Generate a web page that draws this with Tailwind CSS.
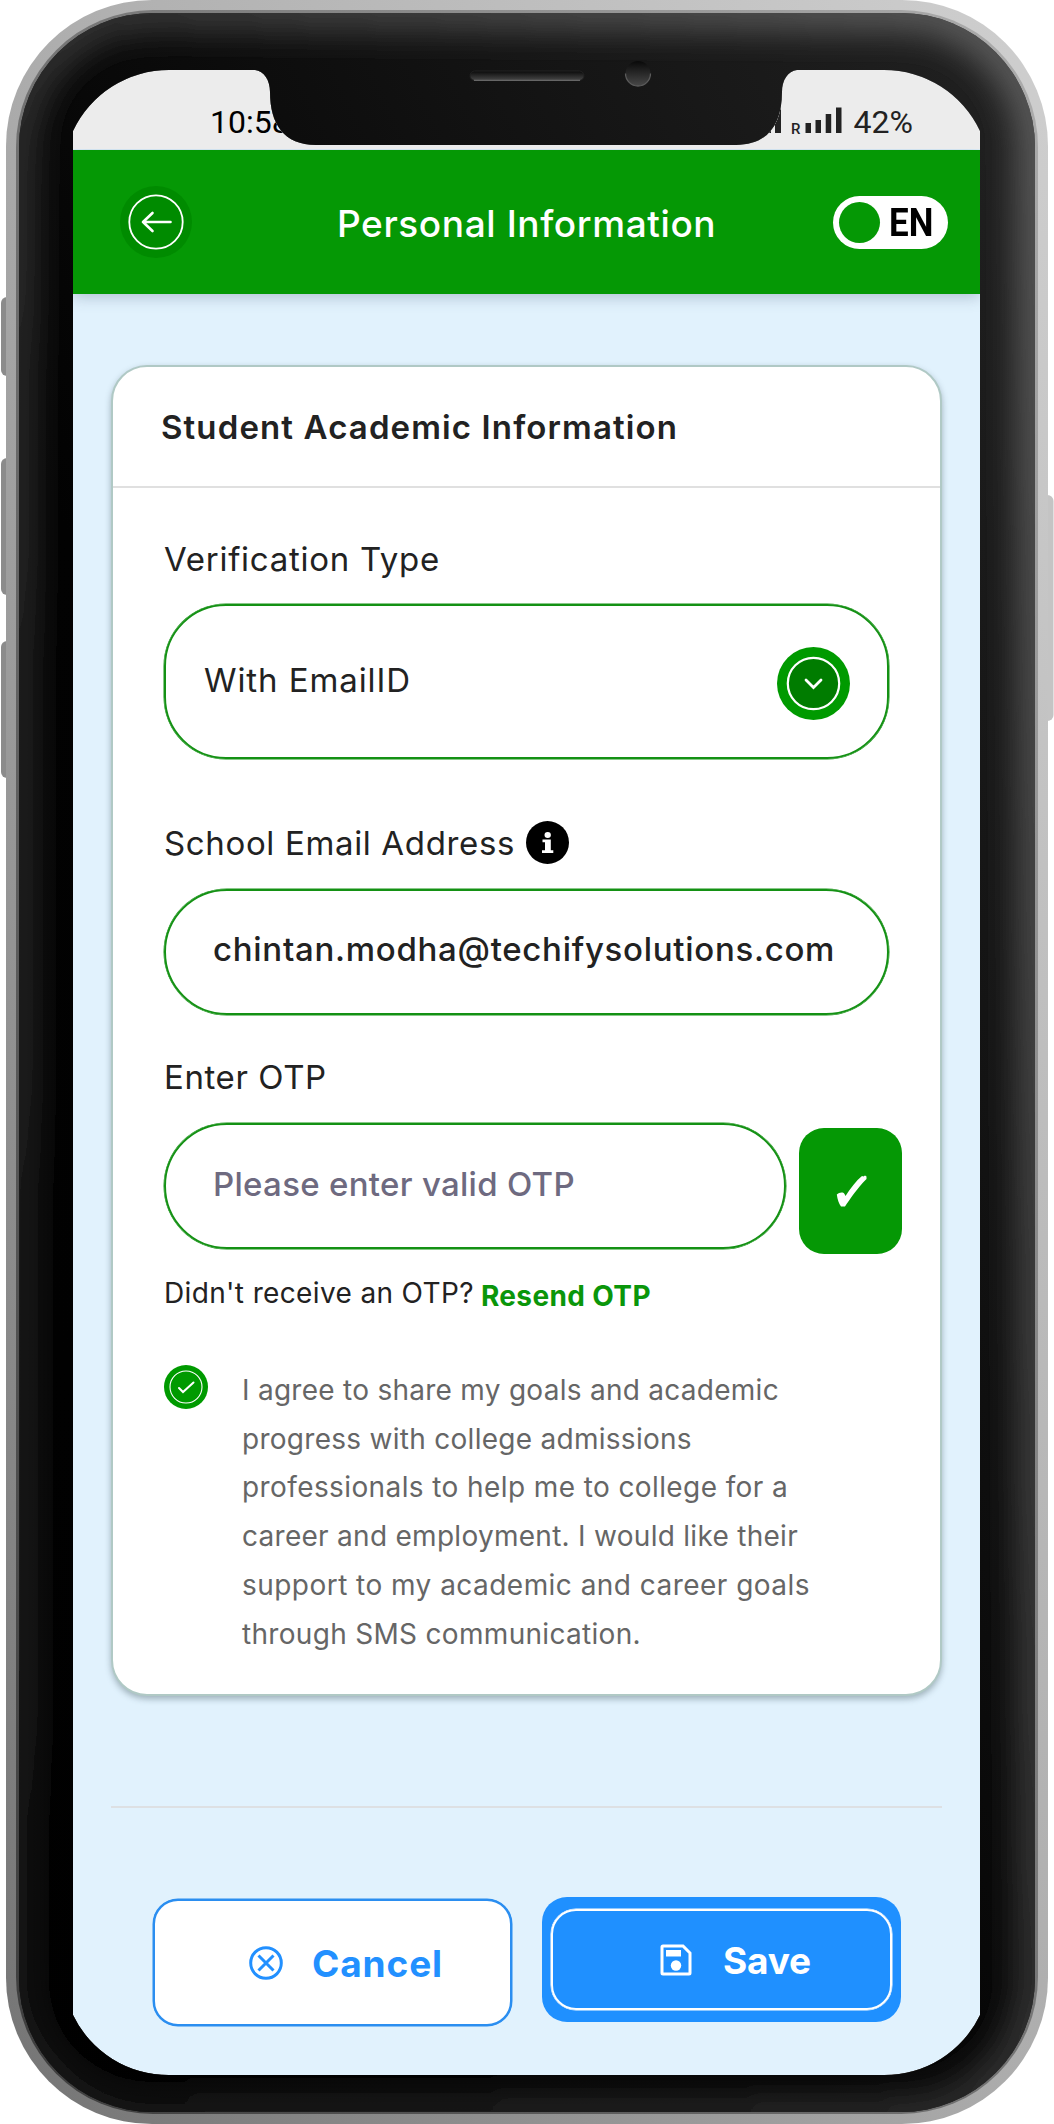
<!DOCTYPE html>
<html lang="en">
<head>
<meta charset="utf-8">
<title>Personal Information</title>
<script src="https://cdn.jsdelivr.net/npm/@tailwindcss/browser@4"></script>
</head>
<body class="bg-white font-['Inter',sans-serif] text-[#222]">
<div class="relative h-[2124px] w-[1054px] overflow-hidden">
  <div class="flex h-full flex-col bg-[#e1f2fd] mx-[60px] pl-[13px] pr-[14px]">
    <!-- status bar -->
    <div class="relative z-20 flex h-[149px] shrink-0 items-end bg-[#ececec] pb-[8px] pl-[137px] pr-[67px] font-['Roboto',sans-serif] text-[32px] leading-[38px]">
      <span class="grow text-black">10:58</span>
      <svg class="mb-[7px] mr-[12px] h-[28px] w-[80px]" viewBox="761 106 80 28" fill="#222"><rect x="764" y="114" width="6" height="19"/><rect x="774" y="107" width="6" height="26"/><text x="790" y="133.500" font-size="15" font-weight="500">R</text><rect x="804.500" y="123" width="5.500" height="10"/><rect x="814.500" y="120" width="5.500" height="13"/><rect x="824.700" y="114" width="5.500" height="19"/><rect x="835" y="107.500" width="5.500" height="25.500"/></svg>
      <span>42%</span>
    </div>
    <!-- header -->
    <header class="relative z-10 mt-px flex h-[144px] shrink-0 items-center bg-[#059805] pl-[47px] pr-[32px] shadow-[0_3px_14px_rgba(60,80,110,0.3)]">
      <svg class="size-[72px]" viewBox="0 0 72 72" fill="none" stroke="#fff" stroke-linecap="round"><circle cx="36" cy="36" r="36" fill="#008b00" stroke="none"/><circle cx="36" cy="36" r="26.700" stroke-width="1.800"/><path d="M50.500 36H23M32.500 27 23 36 32.500 45" stroke-width="2.600" stroke-linejoin="round"/></svg>
      <h1 class="ml-[145px] mt-[3px] grow whitespace-nowrap text-[37px] font-medium leading-[40px] tracking-[0.6px] text-white">Personal Information</h1>
      <div class="flex h-[53px] w-[115px] items-center rounded-full bg-white pl-[6px]">
        <span class="size-[41px] rounded-full bg-[#059805]"></span>
        <span class="ml-[9px] mt-px origin-left scale-x-[0.92] text-[38px] font-bold leading-none text-black font-['Roboto',sans-serif]">EN</span>
      </div>
    </header>
    <!-- form card -->
    <main class="mt-[71px] ml-[38px] h-[1331px] w-[831px] shrink-0 rounded-[36px] border-2 border-[#b0c9c5] bg-white shadow-[0_3px_6px_rgba(60,80,90,0.4)]">
      <div class="flex h-[121px] items-center border-b-2 border-[#e0e0e0] pl-[48px]"><h2 class="whitespace-nowrap text-[33px] font-semibold leading-[40px] tracking-[1.12px]">Student Academic Information</h2></div>
      <div class="whitespace-nowrap pl-[51px] text-[33px] leading-[40px]">
        <div class="mt-[51px] tracking-[0.72px]">Verification Type</div>
        <div class="mt-[25px] flex h-[155px] w-[725px] items-center justify-between rounded-[62px] border-2 border-[#149114] pl-[38px] pr-[37px] shadow-[0_0_0_0.5px_#149114]">
          <span class="mb-[4px] tracking-[0.91px]">With EmailID</span>
          <svg class="mt-[3px] size-[73px]" viewBox="0 0 73 73" fill="none" stroke="#fff"><circle cx="36.500" cy="36.500" r="36.500" fill="#009a00" stroke="none"/><circle cx="36.500" cy="36.500" r="25.700" fill="#007c00" stroke-width="2.200"/><path d="m29 33 7.500 7.500 7.500-7.500" stroke-width="2.800" stroke-linecap="round"/></svg>
        </div>
        <div class="mt-[64px] flex h-[40px]"><span class="tracking-[0.65px]">School Email Address</span>
          <svg class="-mt-[2px] ml-[11px] size-[43px]" viewBox="0 0 43 43"><circle cx="21.500" cy="21.500" r="21.500"/><path fill="#fff" d="M18.500 14a3.200 2.900 0 1 0 6.400 0a3.200 2.900 0 1 0-6.400 0M16.500 18.500h8.300v10.800h2.500v2.700H16v-2.700h3V21.200h-2.500z"/></svg>
        </div>
        <div class="mt-[26px] flex h-[126px] w-[725px] items-center rounded-full border-2 border-[#149114] pb-[7px] pl-[47px] font-medium tracking-[0.71px] shadow-[0_0_0_0.5px_#149114]">chintan.modha@techifysolutions.com</div>
        <div class="mt-[42px] tracking-[0.6px]">Enter OTP</div>
        <div class="mt-[26px] flex">
          <div class="flex h-[126px] w-[622px] items-center rounded-full border-2 border-[#149114] pb-[4px] pl-[47px] font-medium tracking-[0.3px] text-[#6e6a80] shadow-[0_0_0_0.5px_#149114]">Please enter valid OTP</div>
          <button class="mt-[5px] ml-[12.500px] flex h-[126px] w-[103px] items-center justify-center rounded-[25px] bg-[#059805]"><svg class="ml-[2px] h-[32px] w-[31px]" viewBox="0 0 31 32" fill="#fff"><path d="M30.500 1.500 29 .5l-1.500 1L26 1C20 6 14.500 13 9.500 21L8.500 19C7 16.500 3 17.500.8 19.500 1.500 25 3 28.500 5 31.500h4C14 24 21 13.500 30.500 4z"/></svg></button>
        </div>
        <div class="mt-[19px] flex h-[43px] text-[28px]"><span class="tracking-[0.36px]">Didn't receive an OTP?</span><a class="mt-[3px] ml-[7px] font-bold tracking-[0.37px] text-[#0a960a]">Resend OTP</a></div>
        <div class="mt-[49px] flex gap-[34px]">
          <svg class="size-[44px] shrink-0" viewBox="0 0 44 44" fill="none" stroke="#fff"><circle cx="22" cy="22" r="22" fill="#009a00" stroke="none"/><circle cx="22" cy="22" r="16" stroke-width="1.100"/><path d="m15 23 4 4 10.500-9.500" stroke-width="2" stroke-linecap="round"/></svg>
          <p class="mt-px text-[28px] leading-[48.700px] text-[#666]">
            <span class="tracking-[0.27px]">I agree to share my goals and academic</span><br>
            <span class="tracking-[0.28px]">progress with college admissions</span><br>
            <span class="tracking-[0.4px]">professionals to help me to college for a</span><br>
            <span class="tracking-[0.28px]">career and employment. I would like their</span><br>
            <span class="tracking-[0.46px]">support to my academic and career goals</span><br>
            <span class="tracking-[0.31px]">through SMS communication.</span>
          </p>
        </div>
      </div>
    </main>
    <div class="mt-[110px] ml-[38px] h-[2px] w-[831px] shrink-0 bg-[#dde0e3]"></div>
    <!-- actions -->
    <div class="mt-[89px] ml-[80px] flex gap-[30px] text-[37px] font-bold leading-[44px]">
      <button class="mt-[2px] flex h-[127px] w-[359px] items-center rounded-[25px] border-2 border-[#2b8ef0] bg-white pl-[93px] text-[#2290ff] shadow-[0_0_0_0.5px_#2b8ef0]">
        <svg class="mt-px size-[36px] shrink-0" viewBox="0 0 36 36" fill="none" stroke="currentColor" stroke-width="3"><circle cx="18" cy="18" r="15.300"/><path d="m10.500 10.500 15 15m0-15-15 15"/></svg>
        <span class="mt-[2px] ml-[28px] tracking-[0.88px]">Cancel</span>
      </button>
      <button class="h-[125px] w-[359px] rounded-[25px] bg-[#1f90ff] px-[9px] text-white">
        <span class="flex h-[101px] items-center rounded-[25px] border-[2px] border-white pl-[107px] shadow-[0_0_0_0.5px_#fff]">
          <svg class="mt-px size-[32px] shrink-0" viewBox="0 0 32 32"><path d="M3 2h20l7 7v20a1 1 0 0 1-1 1H3a1 1 0 0 1-1-1V3a1 1 0 0 1 1-1z" fill="none" stroke="#fff" stroke-width="3"/><path d="M6 6h15v6.500H6z" fill="#fff"/><circle cx="16" cy="21.500" r="5.200" fill="#fff"/></svg>
          <span class="mt-[2px] ml-[31px] tracking-[-0.16px]">Save</span>
        </span>
      </button>
    </div>
  </div>
  <!-- device frame -->
  <svg class="absolute inset-0 z-30 h-[2124px] w-[1054px]" viewBox="0 0 1054 2124">
    <defs>
      <linearGradient id="metal" x1="0" y1="1" x2="1" y2="0"><stop offset="0" stop-color="#747474"/><stop offset=".5" stop-color="#adadad"/><stop offset="1" stop-color="#cfcfcf"/></linearGradient>
      <linearGradient id="rim" x1="0" y1="1" x2="1" y2="0"><stop offset="0" stop-color="#3c3c3c"/><stop offset=".5" stop-color="#747474"/><stop offset="1" stop-color="#adadad"/></linearGradient>
      <linearGradient id="body" x1="0" y1="1" x2="1" y2="0"><stop offset="0" stop-color="#000"/><stop offset=".4" stop-color="#020202"/><stop offset="1" stop-color="#222"/></linearGradient>
      <linearGradient id="glow" x1="0" y1="1" x2="1" y2="0"><stop offset="0" stop-color="#161616"/><stop offset=".4" stop-color="#262626"/><stop offset="1" stop-color="#5c5c5c"/></linearGradient>
      <linearGradient id="slot" x1="0" y1="0" x2="0" y2="1"><stop offset="0" stop-color="#090909"/><stop offset="1" stop-color="#484848"/></linearGradient>
      <filter id="soft" filterUnits="userSpaceOnUse" x="-40" y="-40" width="1134" height="2204"><feGaussianBlur stdDeviation="16"/></filter>
      <clipPath id="hole"><path clip-rule="evenodd" d="M0 0H1054V2124H0ZM73 131A106 106 0 0 1 169 70H255C264 71 270 80 270 92C270 124 284 145 316 145H736C768 145 782 124 782 92C782 80 788 71 797 70H884A106 106 0 0 1 980 131V2015A106 106 0 0 1 884 2075H169A106 106 0 0 1 73 2015Z"/></clipPath>
      <clipPath id="inner"><rect x="19" y="13" width="1016" height="2099" rx="134"/></clipPath>
    </defs>
    <g clip-path="url(#hole)">
      <path fill="#fff" d="M0 0H1054V2124H0Z"/>
      <g fill="#8b8b8b"><rect x="1" y="297" width="14" height="79" rx="6"/><rect x="1" y="458" width="14" height="137" rx="6"/><rect x="1" y="641" width="14" height="137" rx="6"/></g>
      <rect x="1040" y="495" width="13.500" height="226" rx="6" fill="#c4c4c4"/>
      <rect x="6" width="1042" height="2124" rx="146" fill="url(#metal)"/>
      <rect x="16" y="10" width="1022" height="2104" rx="137" fill="url(#rim)"/>
      <g clip-path="url(#inner)">
        <rect x="19" y="13" width="1016" height="2099" fill="url(#body)"/>
        <rect x="16" y="10" width="1022" height="2105" rx="136" fill="none" stroke="url(#glow)" stroke-width="44" filter="url(#soft)"/>
      </g>
      <rect x="470" y="71" width="114" height="9.500" rx="4.700" fill="url(#slot)" stroke="#222"/><path d="M474 80.300H580" stroke="#666" stroke-width="1.200"/>
      <circle cx="638" cy="73.500" r="12.500" fill="url(#slot)"/><path d="M625.500 73.500a12.500 12.500 0 0 0 25 0" fill="none" stroke="#5a5a5a" stroke-width="1.300"/>
    </g>
  </svg>
</div>
</body>
</html>
